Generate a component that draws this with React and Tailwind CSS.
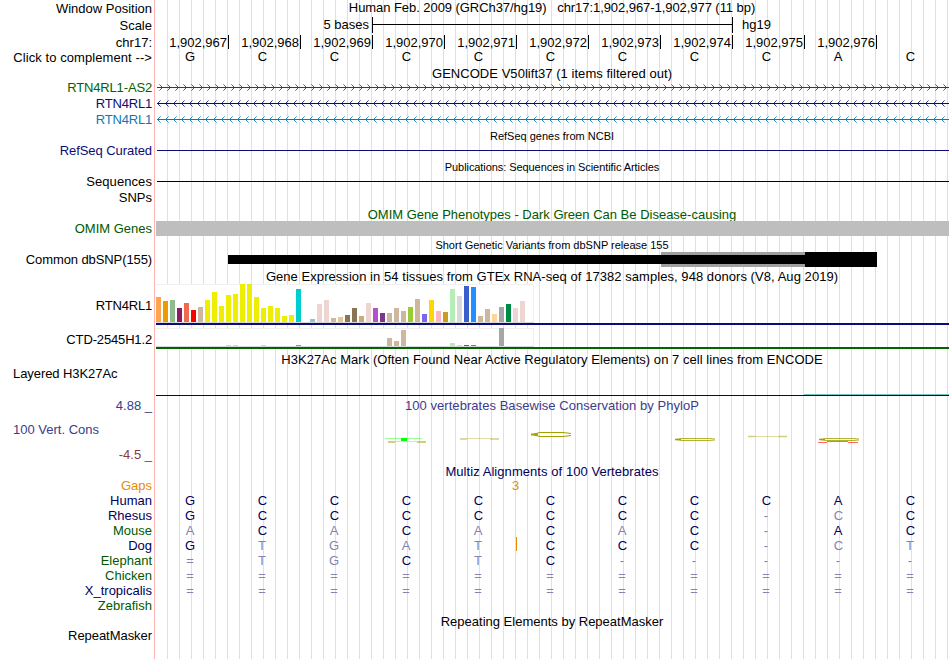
import React from 'react';
import clsx from 'clsx';

const HUMAN = 'GCCCCCCCCAC';

const positions = [
  '1,902,967', '1,902,968', '1,902,969', '1,902,970', '1,902,971',
  '1,902,972', '1,902,973', '1,902,974', '1,902,975', '1,902,976',
];

const species = [
  { name: 'Human', seq: HUMAN, color: 'text-[#00005a]' },
  { name: 'Rhesus', seq: 'GCCCCCCC-CC', color: 'text-[#00005a]' },
  { name: 'Mouse', seq: 'ACACACAC-AC', color: 'text-[#005a00]' },
  { name: 'Dog', seq: 'GTGATCCC-CT', color: 'text-[#00005a]', insert: true },
  { name: 'Elephant', seq: '=TGCTC-----', color: 'text-[#005a00]' },
  { name: 'Chicken', seq: '===========', color: 'text-[#005a00]' },
  { name: 'X_tropicalis', seq: '===========', color: 'text-[#00005a]' },
  { name: 'Zebrafish', seq: '', color: 'text-[#005a00]' },
];

const tissueColors = [
  '#ffa54f', '#ee9a00', '#8fbc8f', '#8b1c62', '#ee6a50', '#ff0000', '#cdb79e',
  '#eeee00', '#eeee00', '#eeee00', '#eeee00', '#eeee00', '#eeee00', '#eeee00',
  '#eeee00', '#eeee00', '#eeee00', '#eeee00', '#eeee00', '#eeee00', '#00cdcd',
  '#ee82ee', '#9ac0cd', '#eed5d2', '#eed5d2', '#cdb79e', '#eec591', '#8b7355',
  '#8b7355', '#cdaa7d', '#eed5d2', '#b452cd', '#7a378b', '#cdb79e', '#cdb79e',
  '#cdb79e', '#9acd32', '#cdb79e', '#7a67ee', '#ffd700', '#ffb6c1', '#cd9b1d',
  '#b4eeb4', '#d9d9d9', '#3a5fcd', '#1e90ff', '#cdb79e', '#cdb79e', '#ffd39b',
  '#a6a6a6', '#008b45', '#eed5d2', '#eed5d2', '#ff00ff',
];

const rtnExpression = [
  25, 21, 22, 14, 19, 12, 15, 22, 30, 16, 27, 28, 38, 38, 25, 14, 16, 14,
  6, 7, 33, 0, 3, 18, 22, 4, 5, 7, 14, 6, 19, 14, 9, 9, 14, 11,
  15, 23, 8, 22, 11, 10, 33, 26, 36, 35, 6, 13, 8, 15, 18, 14, 21, 0,
];

const ctdExpression = [
  0, 0, 0, 0, 0, 0, 0, 0, 0, 0, 1, 1, 0, 0, 0, 1, 0, 0,
  0, 0, 1, 0, 0, 0, 0, 0, 0, 0, 0, 0, 0, 0, 0, 8, 5, 16,
  0, 0, 0, 0, 0, 0, 3, 1, 1, 1, 0, 0, 0, 18, 0, 0, 0, 0,
];

// One line of the browser: label on the left, track content on the right
function Row({ height, label, labelClass, children, className }) {
  return (
    <div className={clsx('flex shrink-0', height)}>
      <div className={clsx('w-[152px] shrink-0 text-right', labelClass)}>{label}</div>
      <div className={clsx('ml-[3px] w-[794px] shrink-0', className)}>{children}</div>
    </div>
  );
}

function Bases({ seq, compare }) {
  return (
    <div className="-ml-px grid w-[792px] grid-cols-11 text-center">
      {seq.split('').map((base, i) => (
        <span
          key={i}
          className={clsx(
            base === 'C' && 'pl-px',
            compare && (base === HUMAN[i] ? 'text-[#00005a]' : 'text-[#8484b4]')
          )}
        >
          {base}
        </span>
      ))}
    </div>
  );
}

function GeneLine({ id, color, reverse }) {
  return (
    <svg width="794" height="16" className="block" shapeRendering="crispEdges">
      <defs>
        <pattern id={id} x={reverse ? 2 : 0} y="0" width="8" height="16" patternUnits="userSpaceOnUse">
          {[1, 2, 3].map((d) => (
            <g key={d} fill={color} opacity={d === 3 ? 0.5 : 0.85}>
              <rect x={reverse ? d : 7 - d} y={7 - d} width="1" height="1" />
              <rect x={reverse ? d : 7 - d} y={7 + d} width="1" height="1" />
            </g>
          ))}
        </pattern>
      </defs>
      <rect x="2" y="0" width="792" height="16" fill={`url(#${id})`} />
      <rect x="2" y="7" width="792" height="1" fill={color} />
    </svg>
  );
}

function Expression({ values, height, line }) {
  return (
    <svg width="794" height={height + 3} className="block" shapeRendering="crispEdges">
      <rect x="1" y="0" width="378" height={height} fill="#f0f0f0" />
      <rect x="1" y="1" width="377" height={height - 1} fill="#fff" />
      <rect x="1" y={height} width="378" height="1" fill="#d8d8d8" />
      {values.map((v, i) => (
        <rect key={i} x={1 + i * 7} y={height - v} width="5" height={v} fill={tissueColors[i]} />
      ))}
      <rect x="1" y={height + 1} width="793" height="2" fill={line} />
    </svg>
  );
}

// Flattened base letters of the conservation plot
function PhyloP() {
  return (
    <svg width="794" height="34" className="block" fill="none">
      <g stroke="#a0a000">
        <path d="M233 21h7M262 21h9" strokeWidth="2" opacity="0.5" />
        <path d="M240 20.5h22" opacity="0.3" />
        <path d="M305 18h7M335 18h9" strokeWidth="1.5" opacity="0.5" />
        <path d="M312 17.5h23" opacity="0.35" />
        <path d="M593 15.5h7M623 15.5h9" strokeWidth="1.5" opacity="0.5" />
        <path d="M600 15.5h23" opacity="0.35" />
        <path d="M416 12.5l-8-1h-23l-6 1.5v1l6 1.5h23l8-1" />
        <path d="M376 13.5h7" strokeWidth="2" />
        {[520, 664].map((x) => (
          <g key={x}>
            <path d={`M${x + 40} 18l-6-.5h-27l-6 1 6 1h27l6-.5`} strokeWidth="0.8" />
            <path d={`M${x} 18.5h6`} strokeWidth="1.5" />
          </g>
        ))}
      </g>
      <path d="M230 17.5h37" stroke="#00ff00" opacity="0.4" />
      <rect x="246" y="17" width="6" height="3" fill="#00ff00" />
      <path d="M663 21.5h9M693 21.5h10M672 20.5h21" stroke="#ff0000" opacity="0.6" />
    </svg>
  );
}

export default function App() {
  return (
    <div className="h-[659px] w-[950px] overflow-hidden bg-white font-['Liberation_Sans',Arial,sans-serif] text-[13px] leading-[15px] whitespace-pre text-black">
      {/* 12px guide lines behind the tracks, masked out under the labels */}
      <div className="h-full bg-[linear-gradient(to_right,#dcdcff_1px,transparent_1px)] bg-[length:12px_100%] bg-[position:167px_0] bg-repeat-x">
        <div className="flex h-full flex-col bg-[linear-gradient(to_right,#fff_154px,#ffb4b4_154px,#ffb4b4_155px,#fff_155px,#fff_156px,transparent_156px)]">
          {/* Ruler */}
          <Row height="h-[17px]" label="Window Position" labelClass="pt-px" className="text-center tracking-[-0.06px]">
            Human Feb. 2009 (GRCh37/hg19)   chr17:1,902,967-1,902,977 (11 bp)
          </Row>
          <Row height="h-[18px]" label="Scale" labelClass="pt-px" className="flex">
            <div className="w-[214px] text-right">5 bases</div>
            <div className="ml-[3px] h-4 w-[361px] border-x border-black pt-[7px]">
              <div className="h-px bg-black" />
            </div>
            <div className="ml-[9px]">hg19</div>
          </Row>
          <Row height="h-[14px]" label="chr17:" className="flex">
            <div className="ml-[2px] grid w-[720px] grid-cols-10 text-right">
              {positions.map((p) => (
                <div key={p} className="h-[14px] border-r border-black pr-px">{p}</div>
              ))}
            </div>
          </Row>
          <Row height="h-[17px]" label="Click to complement -->" labelClass="pt-px tracking-[0.08px]">
            <Bases seq={HUMAN} />
          </Row>

          {/* Genes */}
          <Row height="h-[14px]" className="text-center tracking-[0.04px]">GENCODE V50lift37 (1 items filtered out)</Row>
          <Row height="h-4" label="RTN4RL1-AS2" labelClass="text-[#006400] tracking-[-0.15px]">
            <GeneLine id="as2" color="#006400" />
          </Row>
          <Row height="h-4" label="RTN4RL1" labelClass="text-[#0c0c78] tracking-[-0.2px]">
            <GeneLine id="rtn-a" color="#0c0c78" reverse />
          </Row>
          <Row height="h-4" label="RTN4RL1" labelClass="text-[#0c78b4] tracking-[-0.2px]">
            <GeneLine id="rtn-b" color="#0c78b4" reverse />
          </Row>
          <Row height="h-[15px]" className="pt-px text-center text-[11px]">RefSeq genes from NCBI</Row>
          <Row height="h-4" label="RefSeq Curated" labelClass="text-[#0c0c78] tracking-[-0.07px]" className="pt-[7px] pl-[2px]">
            <div className="h-px bg-[#0c0c78]" />
          </Row>

          {/* Publications */}
          <Row height="h-[15px]" className="pt-px text-center text-[11px] tracking-[-0.07px]">
            Publications: Sequences in Scientific Articles
          </Row>
          <Row height="h-4" label="Sequences" labelClass="tracking-[0.08px]" className="pt-[7px] pl-[2px]">
            <div className="h-px bg-black" />
          </Row>
          <Row height="h-[17px]" label="SNPs" />

          {/* OMIM */}
          <Row height="h-[14px]" className="h-[14px] overflow-hidden text-center text-[#005a00]">
            OMIM Gene Phenotypes - Dark Green Can Be Disease-causing
          </Row>
          <Row height="h-[15px]" label="OMIM Genes" labelClass="text-[#005a00]" className="pl-px">
            <div className="h-full w-[793px] bg-[#bebebe]" />
          </Row>

          {/* dbSNP */}
          <Row height="h-4" className="pt-[2px] text-center text-[11px]">Short Genetic Variants from dbSNP release 155</Row>
          <Row height="h-[17px]" label="Common dbSNP(155)" labelClass="tracking-[-0.1px]" className="flex">
            <div className="mt-[3px] ml-[73px] h-[9px] w-[433px] bg-black" />
            <div className="h-[15px] w-36 bg-[#a0a0a0] py-[3px]">
              <div className="h-full bg-black" />
            </div>
            <div className="h-[15px] w-[72px] bg-black" />
          </Row>

          {/* GTEx */}
          <Row height="h-[15px]" className="text-center tracking-[0.055px]">
            Gene Expression in 54 tissues from GTEx RNA-seq of 17382 samples, 948 donors (V8, Aug 2019)
          </Row>
          <Row height="h-[41px]" label="RTN4RL1" labelClass="pt-[14px] tracking-[-0.2px]">
            <Expression values={rtnExpression} height={38} line="#0c0c78" />
          </Row>
          <Row height="h-[27px]" label="CTD-2545H1.2" labelClass="pt-[7px] tracking-[-0.15px]" className="pt-[3px]">
            <Expression values={ctdExpression} height={18} line="#006400" />
          </Row>

          {/* H3K27Ac */}
          <Row height="h-[14px]" className="text-center tracking-[0.045px]">
            H3K27Ac Mark (Often Found Near Active Regulatory Elements) on 7 cell lines from ENCODE
          </Row>
          <Row height="h-8" label="Layered H3K27Ac" labelClass="pl-[13px] text-left! tracking-[-0.07px]" className="pt-7 pl-px">
            <div className="ml-[648px] h-px bg-[#6cc8c0]" />
            <div className="h-px bg-[#0c0c28]" />
          </Row>

          {/* Conservation */}
          <Row
            height="h-[66px]"
            label={
              <div className="text-[#3c3c8c]">
                <div>4.88 _</div>
                <div className="mt-[9px] pl-[13px] text-left">100 Vert. Cons</div>
                <div className="mt-[10px] text-[#8c3c3c]">-4.5 _</div>
              </div>
            }
          >
            <div className="mb-2 text-center tracking-[0.04px] text-[#3c3c8c]">
              100 vertebrates Basewise Conservation by PhyloP
            </div>
            <PhyloP />
          </Row>

          {/* Multiz alignment */}
          <Row height="h-[14px]" className="text-center tracking-[0.06px] text-[#00005a]">
            Multiz Alignments of 100 Vertebrates
          </Row>
          <Row height="h-[15px]" label="Gaps" labelClass="text-[#e68c00]" className="pl-[357px] text-[#e68c00]">3</Row>
          {species.map((s) => (
            <Row key={s.name} height="h-[15px]" label={s.name} labelClass={s.color} className="relative">
              <Bases seq={s.seq} compare />
              {s.insert && <div className="absolute -top-px left-[361px] h-[14px] w-px bg-[#e68c00]" />}
            </Row>
          ))}

          {/* RepeatMasker */}
          <Row height="h-[15px]" className="pt-px text-center">Repeating Elements by RepeatMasker</Row>
          <Row height="h-[31px]" label="RepeatMasker" labelClass="tracking-[-0.05px]" />
        </div>
      </div>
    </div>
  );
}
